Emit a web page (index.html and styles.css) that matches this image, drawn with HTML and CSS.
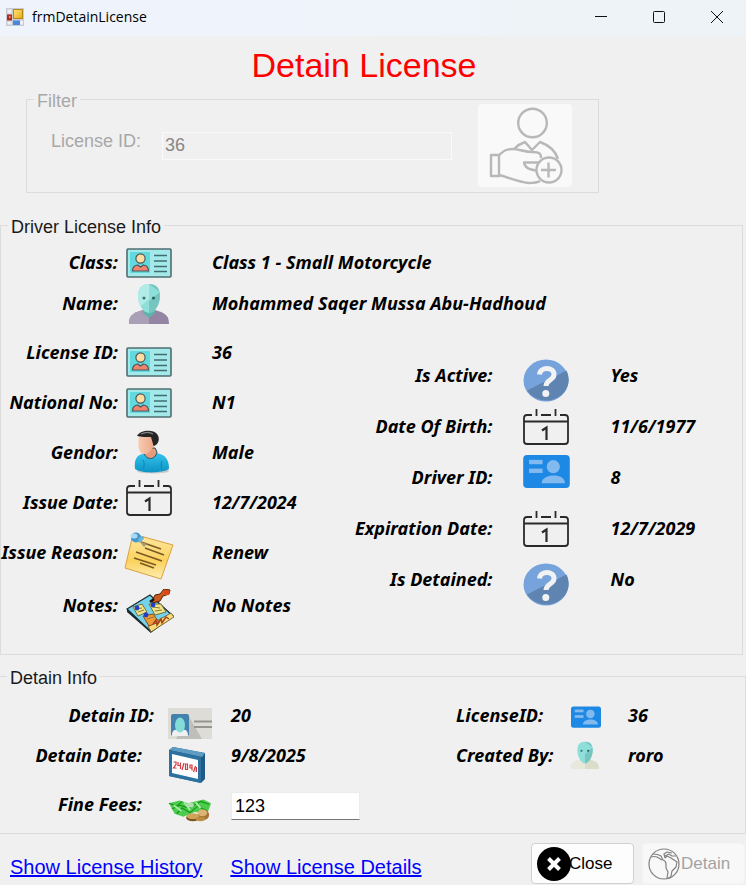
FILE: index.html
```html
<!DOCTYPE html>
<html lang="en">
<head>
<meta charset="utf-8">
<title>frmDetainLicense</title>
<link rel="stylesheet" href="styles.css">
</head>
<body>
<svg class="sprite" aria-hidden="true">
  <defs>
    <linearGradient id="noteFill" x1="0" y1="0" x2="0" y2="1"><stop offset="0" stop-color="#fde9a8"/><stop offset=".6" stop-color="#fbd25c"/><stop offset="1" stop-color="#fdeeb4"/></linearGradient>
    <linearGradient id="shirtFill" x1="0" y1="0" x2="0" y2="1"><stop offset="0" stop-color="#35c3ee"/><stop offset="1" stop-color="#0b93c4"/></linearGradient>
    <linearGradient id="faceFill" x1="0" y1="0" x2="1" y2="0"><stop offset="0" stop-color="#f9cbb0"/><stop offset="1" stop-color="#e9a382"/></linearGradient>
    <linearGradient id="yellowFill" x1="0" y1="0" x2="1" y2="1"><stop offset="0" stop-color="#ffe680"/><stop offset="1" stop-color="#e8a90c"/></linearGradient>
  </defs>
  <symbol id="i-card" viewBox="0 0 46 30">
    <rect x="1" y="1" width="44" height="28" rx="1" fill="#a3e9ea" stroke="#4f6d70" stroke-width="1.6"/>
    <rect x="4" y="4" width="20" height="21" fill="#60d9df"/>
    <path d="M6.500 23c0-4 2-5.500 5-6l3 2 3-2c3 .5 5 2 5 6z" fill="#f0836c" stroke="#51565a" stroke-width="1.200"/>
    <circle cx="14.500" cy="10.500" r="4.600" fill="#fddda0" stroke="#51565a" stroke-width="1.200"/>
    <path d="M28 7.500h13M28 13h13M28 18.500h13M28 23.500h13" stroke="#416d72" stroke-width="1.500"/>
  </symbol>
  <symbol id="i-alien" viewBox="0 0 40 40">
    <path d="M0 40c0-8 3-11 14-14l6 6 6-6c11 3 14 6 14 14z" fill="#9385a3"/>
    <path d="M0 40c0-8 3-11 14-14l6 6v8z" fill="#aaa0b6"/>
    <path d="M14 24h12v5l-6 5-6-5z" fill="#5fb3ad"/>
    <path d="M20 0C12 0 9 5 9 12c0 8 5 17 11 17s11-9 11-17C31 5 28 0 20 0z" fill="#8edfd9"/>
    <path d="M20 0c8 0 11 5 11 12 0 8-5 17-11 17V17l11-9z" fill="#76c5be"/>
    <path d="M20 0C12 0 9 5 9 12c0 4 1 7 3 10l8-7z" fill="#b3ebe6"/>
    <circle cx="15" cy="14" r="1.600" fill="#3d7774"/><circle cx="24.500" cy="14" r="1.600" fill="#2f6360"/>
  </symbol>
  <symbol id="i-alien-light" viewBox="0 0 40 40">
    <path d="M0 40c0-8 3-11 14-14h12c11 3 14 6 14 14z" fill="#dcdcca"/>
    <path d="M0 40c0-8 3-11 14-14h6v14z" fill="#e8e8dc"/>
    <path d="M20 1C12 1 9 6 9 13c0 9 5 19 11 19s11-10 11-19C31 6 28 1 20 1z" fill="#8edfd9"/>
    <path d="M20 1c8 0 11 5 11 12 0 9-5 19-11 19V19l11-10z" fill="#76c5be"/>
    <circle cx="15" cy="14" r="1.600" fill="#3d7774"/><circle cx="24.500" cy="14" r="1.600" fill="#2f6360"/>
  </symbol>
  <symbol id="i-man" viewBox="0 0 36 44">
    <ellipse cx="19" cy="41" rx="16" ry="2.500" fill="#c4c9cc"/>
    <path d="M1 39c-1-9 1-14 10-16h12c9 2 12 7 12 16-6 4-27 5-34 0z" fill="url(#shirtFill)"/>
    <path d="M10 23c2 7 11 8 13-1l-2-4H12z" fill="#e39b7b" stroke="#234b5c" stroke-width="1"/>
    <path d="M5 5c-1 8-1 14 2 18 3 2 8 1 10-3l5-6-1-9z" fill="url(#faceFill)"/>
    <path d="M3 6C6 0 19-1 23 4c3 4 2 8-1 11-2 1-3 1-3-1l-2-7C12 7 7 7 3 6z" fill="#252525"/>
    <path d="M7 4c4-2 9-2 12 0" fill="none" stroke="#858585" stroke-width="1.200"/>
    <path d="M9 30c2 4 1 7 0 9M28 31c-1 3-1 5 0 8" fill="none" stroke="#0f83ae" stroke-width="1"/>
  </symbol>
  <symbol id="i-calendar" viewBox="0 0 46 38">
    <path d="M9 7H4Q1 7 1 10v23q0 3 3 3h38q3 0 3-3V10q0-3-3-3h-5M18 7h10M1 13.500h44" fill="none" stroke="#2a2a2a" stroke-width="1.800"/>
    <path d="M13.500 1v7M32.500 1v7" stroke="#2a2a2a" stroke-width="1.800"/>
    <path d="M19 22.500l4.500-3V32" fill="none" stroke="#2a2a2a" stroke-width="2.200"/>
  </symbol>
  <symbol id="i-note" viewBox="0 0 50 48">
    <path d="M9 2l40 11-12 34L1 36z" fill="url(#noteFill)" stroke="#dda03a" stroke-width="1"/>
    <path d="M17 10l20 7M21 16l19 7M12 20l26 9M10 26l22 7M16 31l14 5" stroke="#7c5a22" stroke-width="1.700"/>
    <path d="M15 9l8 3-3 3z" fill="#a79a74"/>
    <ellipse cx="12" cy="5.500" rx="5" ry="5" fill="#4598ce"/><ellipse cx="10" cy="4" rx="3.500" ry="2.500" fill="#a9dcf4"/>
    <path d="M14 7q5-4 6-2t-5 6z" fill="#6ab5de"/>
  </symbol>
  <symbol id="i-board" viewBox="0 0 48 44">
    <path d="M1 20L24 6l23 21-22 16z" fill="#74d2ea" stroke="#1b2a2e" stroke-width="1.200"/>
    <path d="M1 20l24 22 0 2L1 23z" fill="#1b2a2e"/>
    <path d="M22 37l23-13 3 4-23 15z" fill="#f6dc7a" stroke="#5d5325" stroke-width=".8"/>
    <path d="M7 18l9-3 5 8-9 4z" fill="#efe48d" stroke="#6b6430" stroke-width=".9"/>
    <path d="M23 15l12 0 5 8-11 3z" fill="#efe48d" stroke="#6b6430" stroke-width=".9"/>
    <path d="M17 27l10-2 6 8-10 4z" fill="#f09a3a" stroke="#7a4312" stroke-width=".9"/>
    <path d="M10 20l6-1M12 23l6-2M27 18l7 1M29 22l7-1M21 30l7-2" stroke="#8d7b2d" stroke-width="1"/>
    <path d="M27 35l3-4 1 5 4-6 1 4 4-6 3 2" fill="none" stroke="#a8401a" stroke-width="1.500"/>
    <circle cx="11" cy="19" r="2.400" fill="#213fc4"/><circle cx="27" cy="16" r="2.400" fill="#213fc4"/><circle cx="20" cy="26" r="2.400" fill="#213fc4"/>
    <path d="M26 12l3-6 5-1 4-5 6 1-1 4-6 2-3 5-7 2z" fill="#cb5a1f" stroke="#542508" stroke-width="1"/>
    <circle cx="41" cy="3.500" r="2.800" fill="#e0451b"/>
    <path d="M24 13l4-3" stroke="#151515" stroke-width="2.500"/>
  </symbol>
  <symbol id="i-question" viewBox="0 0 46 43" preserveAspectRatio="none">
    <ellipse cx="23" cy="21.500" rx="22.500" ry="21" fill="#76a3dc"/>
    <path d="M4 31.500L43.500 11.500A22.500 21 0 0 1 4 31.500z" fill="#6084b2"/>
    <path d="M16.500 15.500c.5-8 14.500-8 14.500 0 0 6-8 5-8 11.500" fill="none" stroke="#f2f2f2" stroke-width="5"/>
    <circle cx="22.800" cy="34.500" r="3.500" fill="#f2f2f2"/>
  </symbol>
  <symbol id="i-contact" viewBox="0 0 48 34">
    <rect x="0" y="0" width="48" height="34" rx="4" fill="#1e88e5"/>
    <g fill="#82b9ee"><rect x="6" y="5" width="14" height="4.500"/><rect x="6" y="14" width="14" height="4.500"/>
    <circle cx="31" cy="12" r="6.800"/><path d="M19 29c0-10 24-11 24 0z"/></g>
  </symbol>
  <symbol id="i-idcard" viewBox="0 0 44 31">
    <path d="M0 0h44v31H0z" fill="#dddcd7"/>
    <path d="M20 7l14 24H8z" fill="#bfbeba"/>
    <rect x="3" y="6" width="18" height="22" rx="2" fill="#4482ae"/>
    <path d="M4 28c0-7 3-6 8-7 5 1 8 0 8 7z" fill="#f0f0f0"/>
    <ellipse cx="12" cy="17" rx="5" ry="7.500" fill="#83dcd7"/>
    <path d="M26 13.500h18M26 19h18" stroke="#969590" stroke-width="2"/>
  </symbol>
  <symbol id="i-date" viewBox="0 0 38 36">
    <path d="M1 3l4-3 32 6v26l-4 4L1 29z" fill="#1f5a86"/>
    <path d="M1 3l4-3 32 6-3 4z" fill="#5f9cc4"/>
    <path d="M1 3l32 7v26L1 29z" fill="#2c72a0"/>
    <path d="M4 7l26 6v19L4 26z" fill="#fff"/>
    <g fill="none" stroke="#d13a40" stroke-width="1.200"><path d="M5.500 15l2.500 0v2.500l-2.500 3.500h3M10 15v3.500h2.500M12.500 15.500v6.500M16 16l-2 7M17.500 17h2v5.500h-2zM24 21h-2v-3h2v5.500M27.500 19l-2 6"/></g>
    <path d="M28.300 20v5" stroke="#d13a40" stroke-width="1.400"/>
  </symbol>
  <symbol id="i-money" viewBox="0 0 46 25">
    <path d="M1 6l11-3 9 3 16-4 8 4-4 11-13-2-12 5-9-3z" fill="#4dcb4c"/>
    <path d="M1 6l8 3 6-5M4 12l8-4 10 3 12-7 9 3M9 17l6-6 8 5 8-7 10 5" fill="none" stroke="#16981c" stroke-width="1.300"/>
    <path d="M6 8l8 6M17 5l6 8M29 5l5 6" stroke="#a4eda0" stroke-width="2"/>
    <ellipse cx="23" cy="8" rx="4" ry="2.500" fill="#b2ddb0"/>
    <ellipse cx="37" cy="18" rx="6" ry="5.500" fill="#a57538"/><ellipse cx="36" cy="16" rx="5" ry="3.500" fill="#dbb476"/>
    <ellipse cx="26" cy="21" rx="7" ry="3.800" fill="#7c5620"/><ellipse cx="26" cy="19.500" rx="6.500" ry="3" fill="#cfa35a"/>
    <ellipse cx="34" cy="22.500" rx="5" ry="2.200" fill="#bf8d42"/>
  </symbol>
  <symbol id="i-close" viewBox="0 0 34 34">
    <circle cx="17" cy="17" r="17" fill="#000"/>
    <path d="M11.500 11.500l11 11M22.500 11.500l-11 11" stroke="#fff" stroke-width="4"/>
  </symbol>
  <symbol id="i-globe" viewBox="0 0 32 32">
    <g fill="none" stroke="#808080" stroke-width="1.200" stroke-linejoin="round">
    <circle cx="16" cy="16" r="15"/>
    <path d="M5 6q5 0 8 2l2 4q3 1 3 4l0 4 2 4-1 6q2 1 4-2l1-5 4-4 1-5-3-2-3-2-4-2-2 2"/>
    <path d="M3 9q3-1 6 0l5 3M17 10l-1-4 3-2 5 1M17 8l4-2 3 2 4 0"/>
    </g>
  </symbol>
  <symbol id="i-person-add" viewBox="0 0 94 83">
    <g fill="none" stroke="#b8b8b8" stroke-width="2.400" stroke-linejoin="round">
    <circle cx="54.500" cy="19" r="14.300"/>
    <path d="M36 45q5-5 11-7l7 8 8-8q14 5 18 17"/>
    <path d="M13 51h8v21h-8zM21 51c5-4 7-6 13-6 8 0 12 3 20 3 8 0 9 2 9 6"/>
    <path d="M61 58.500H46c1 6 6 7 12 8M21 71c11 3 20 7 29 8 5 0 9 0 12-2"/>
    <circle cx="71" cy="66" r="12.500" fill="#f9f9f9"/>
    <path d="M63 66h15M70.500 58.500v15"/>
    </g>
  </symbol>
</svg>

<header class="titlebar">
  <svg class="app-icon" viewBox="0 0 18 18" aria-hidden="true">
    <rect width="18" height="18" fill="#c9ccd2"/>
    <path d="M1.500 1.500h4v4h-4zM1.500 13.500h4v3h-4zM14 12.500h3v4h-3z" fill="#f0f0f2"/>
    <rect x="7.500" y="1.500" width="9" height="9" fill="url(#yellowFill)" stroke="#b8871a"/>
    <rect x="1" y="6.500" width="5" height="6" fill="#b02c20"/><rect x="3" y="8" width="1.500" height="2" fill="#ee8a7c"/>
    <rect x="7" y="12.500" width="7" height="4.500" fill="#4a86dc"/>
  </svg>
  <span class="caption">frmDetainLicense</span>
  <div class="window-buttons">
    <button type="button" aria-label="Minimize"><svg viewBox="0 0 12 12"><path d="M0 5.500h12"/></svg></button>
    <button type="button" aria-label="Maximize"><svg viewBox="0 0 12 12"><rect x=".5" y=".5" width="11" height="11" rx="1"/></svg></button>
    <button type="button" aria-label="Close window"><svg viewBox="0 0 12 12"><path d="M0 0l12 12M12 0L0 12"/></svg></button>
  </div>
</header>

<main>
  <h1>Detain License</h1>

  <fieldset class="group filter" disabled>
    <legend>Filter</legend>
    <div class="filter-row">
      <label for="filter-id">License ID:</label>
      <input id="filter-id" type="text" value="36">
      <button type="button" aria-label="Find license"><svg><use href="#i-person-add"/></svg></button>
    </div>
  </fieldset>

  <fieldset class="group driver">
    <legend>Driver License Info</legend>
    <dl class="fields wide">
      <div class="row"><dt>Class:</dt><dd><svg class="card"><use href="#i-card"/></svg></dd><dd>Class 1 - Small Motorcycle</dd></div>
      <div class="row"><dt>Name:</dt><dd><svg class="person"><use href="#i-alien"/></svg></dd><dd>Mohammed Saqer Mussa Abu-Hadhoud</dd></div>
    </dl>
    <div class="columns">
      <dl class="fields left">
        <div class="row"><dt>License ID:</dt><dd class="low"><svg class="card"><use href="#i-card"/></svg></dd><dd>36</dd></div>
        <div class="row"><dt>National No:</dt><dd><svg class="card"><use href="#i-card"/></svg></dd><dd>N1</dd></div>
        <div class="row"><dt>Gendor:</dt><dd><svg class="man"><use href="#i-man"/></svg></dd><dd>Male</dd></div>
        <div class="row"><dt>Issue Date:</dt><dd class="high"><svg class="calendar"><use href="#i-calendar"/></svg></dd><dd>12/7/2024</dd></div>
        <div class="row"><dt>Issue Reason:</dt><dd class="low"><svg class="note"><use href="#i-note"/></svg></dd><dd>Renew</dd></div>
        <div class="row last"><dt>Notes:</dt><dd class="low"><svg class="board"><use href="#i-board"/></svg></dd><dd>No Notes</dd></div>
      </dl>
      <dl class="fields right">
        <div class="row"><dt>Is Active:</dt><dd class="low"><svg class="question"><use href="#i-question"/></svg></dd><dd>Yes</dd></div>
        <div class="row"><dt>Date Of Birth:</dt><dd><svg class="calendar"><use href="#i-calendar"/></svg></dd><dd>11/6/1977</dd></div>
        <div class="row"><dt>Driver ID:</dt><dd class="high"><svg class="contact"><use href="#i-contact"/></svg></dd><dd>8</dd></div>
        <div class="row"><dt>Expiration Date:</dt><dd><svg class="calendar"><use href="#i-calendar"/></svg></dd><dd>12/7/2029</dd></div>
        <div class="row"><dt>Is Detained:</dt><dd class="low"><svg class="question"><use href="#i-question"/></svg></dd><dd>No</dd></div>
      </dl>
    </div>
  </fieldset>

  <fieldset class="group detain">
    <legend>Detain Info</legend>
    <div class="detain-columns">
      <div class="fields detain-left">
        <div class="row"><span class="name near">Detain ID:</span><span class="low"><svg class="idcard"><use href="#i-idcard"/></svg></span><span>20</span></div>
        <div class="row"><span class="name">Detain Date:</span><span class="low"><svg class="date"><use href="#i-date"/></svg></span><span>9/8/2025</span></div>
        <div class="row fees"><label class="name" for="fees">Fine Fees:</label><span><svg class="money"><use href="#i-money"/></svg></span><input id="fees" type="text" value="123"></div>
      </div>
      <dl class="fields detain-right">
        <div class="row"><dt>LicenseID:</dt><dd><svg class="contact-small"><use href="#i-contact"/></svg></dd><dd>36</dd></div>
        <div class="row"><dt>Created By:</dt><dd><svg class="person-small"><use href="#i-alien-light"/></svg></dd><dd>roro</dd></div>
      </dl>
    </div>
  </fieldset>
</main>

<footer>
  <nav>
    <a href="#history">Show License History</a>
    <a href="#details">Show License Details</a>
  </nav>
  <button type="button" class="action"><svg class="close-icon"><use href="#i-close"/></svg>Close</button>
  <button type="button" class="action" disabled><svg class="globe-icon"><use href="#i-globe"/></svg>Detain</button>
</footer>
</body>
</html>
```
FILE: styles.css
```css
* { box-sizing: border-box; }

body {
  margin: 0;
  background: #f0f0f0;
  color: #000;
  font-family: "Liberation Sans", Arial, sans-serif;
  font-size: 18px;
  overflow: hidden;
}

button, input { font: inherit; color: inherit; }
svg { display: block; flex: none; }
.sprite { position: absolute; width: 0; height: 0; }

/* Title bar */
.titlebar {
  display: flex;
  align-items: center;
  height: 36px;
  padding: 0 0 3px 6px;
  background: linear-gradient(90deg, #eff4fc 40%, #edf3f7 70%);
}
.app-icon { width: 18px; height: 18px; margin-right: 8px; }
.caption { font: 14px "Open Sans", sans-serif; }
.window-buttons { display: flex; margin-left: auto; }
.window-buttons button {
  display: grid;
  place-items: center;
  width: 58px;
  height: 33px;
  padding: 0;
  border: 0;
  background: none;
}
.window-buttons svg { width: 12px; height: 12px; fill: none; stroke: #111; overflow: visible; }

h1 {
  margin: 0;
  padding-right: 18px;
  color: #f00;
  font-size: 34px;
  font-weight: 400;
  line-height: 58px;
  text-align: center;
}

/* Group boxes */
.group {
  min-width: 0;
  margin: 0;
  padding: 0;
  border: 1px solid #dcdcdc;
}
.group legend { margin-left: 7px; padding: 4px 3px 0; line-height: 6px; color: #1a1a1a; }

.filter { margin: 0 147px 0 26px; }
.filter .filter-row, .filter legend { color: #a8a8a8; }
.filter-row {
  display: flex;
  align-items: center;
  padding: 0 26px 5px 24px;
}
.filter-row label { padding-bottom: 8px; }
.filter-row input {
  flex: 1;
  min-width: 0;
  height: 28px;
  margin: 0 26px 0 21px;
  padding: 0 2px;
  border: 1px solid #fafafa;
  background: #f0f0f0;
  color: #868686;
}
.filter-row button {
  padding: 0;
  border: 0;
  border-radius: 4px;
  background: #f9f9f9;
}
.filter-row svg { width: 94px; height: 83px; }

/* Field rows */
.fields {
  margin: 0;
  font-family: "Noto Sans", "Open Sans", sans-serif;
  font-size: 18px;
  font-style: italic;
  font-weight: 700;
  line-height: 24px;
}
.row { display: grid; align-items: center; white-space: nowrap; }
.row dt, .row dd { margin: 0; }
.row .low { align-self: end; }
.row .high { align-self: start; }

.driver { margin: 27px 3px 0 0; }
.wide { padding: 12px 0 5px; }
.wide .row { grid-template-columns: 117px 78px 1fr; column-gap: 8px; height: 40px; }
.columns { display: grid; grid-template-columns: 345fr 397fr; padding-bottom: 21px; }
.left .row { grid-template-columns: 117px 78px 1fr; column-gap: 8px; height: 50px; }
.left .last { height: 56px; }
.right { padding-top: 22px; }
.right .row { grid-template-columns: 147px 58px 1fr; column-gap: 30px; height: 51px; }
.driver dt { display: flex; justify-content: flex-end; }

.card { width: 46px; height: 30px; margin-top: 2px; }
.person { width: 40px; height: 40px; margin: 2px 0 0 3px; }
.man { width: 36px; height: 44px; margin-left: 8px; }
.calendar { width: 46px; height: 38px; margin-top: 2px; }
.note { width: 50px; height: 48px; margin: 0 0 -3px -2px; }
.board { width: 48px; height: 44px; }
.question { width: 46px; height: 43px; margin-bottom: -2px; }
.contact { width: 47px; height: 33px; margin-top: 4px; }

.detain { margin-top: 16px; border-left: 0; }
.detain-columns { display: grid; grid-template-columns: 456fr 289fr; padding-top: 14px; }
.detain-left .row { grid-template-columns: 168px 63px 1fr; height: 40px; }
.detain-left .fees { height: 58px; }
.detain-left .name { padding-right: 26px; text-align: right; }
.detain-left .near { padding-right: 14px; }
.detain-right .row { grid-template-columns: 115px 57px 1fr; height: 40px; }
.idcard { width: 44px; height: 31px; margin-bottom: -4px; }
.date { width: 38px; height: 36px; margin-bottom: -8px; }
.money { width: 44px; height: 25px; margin-top: 10px; }
.contact-small { width: 30px; height: 22px; margin-top: 4px; }
.person-small { width: 28px; height: 28px; }
#fees {
  width: 129px;
  height: 28px;
  margin-top: 4px;
  padding: 0 3px;
  border: 1px solid #ececec;
  border-bottom-color: #777;
  background: #fff;
  font: 18px "Liberation Sans", Arial, sans-serif;
}

/* Bottom bar */
footer { display: flex; gap: 8px; padding: 9px 1px 1px 10px; }
nav { display: flex; align-items: center; gap: 28px; margin-right: auto; padding-top: 7px; font-size: 20px; }
nav a { color: #00f; white-space: nowrap; }
.action {
  display: flex;
  align-items: center;
  width: 103px;
  height: 41px;
  padding: 0 5px;
  border: 1px solid #d0d0d0;
  border-radius: 4px;
  background: #fdfdfd;
  font-size: 17px;
}
.action:disabled { border-color: #f4f4f4; background: #f8f8f8; color: #a3a3a3; }
.close-icon { width: 34px; height: 34px; margin-right: -2px; }
.globe-icon { width: 32px; height: 32px; margin-right: 1px; }
```
